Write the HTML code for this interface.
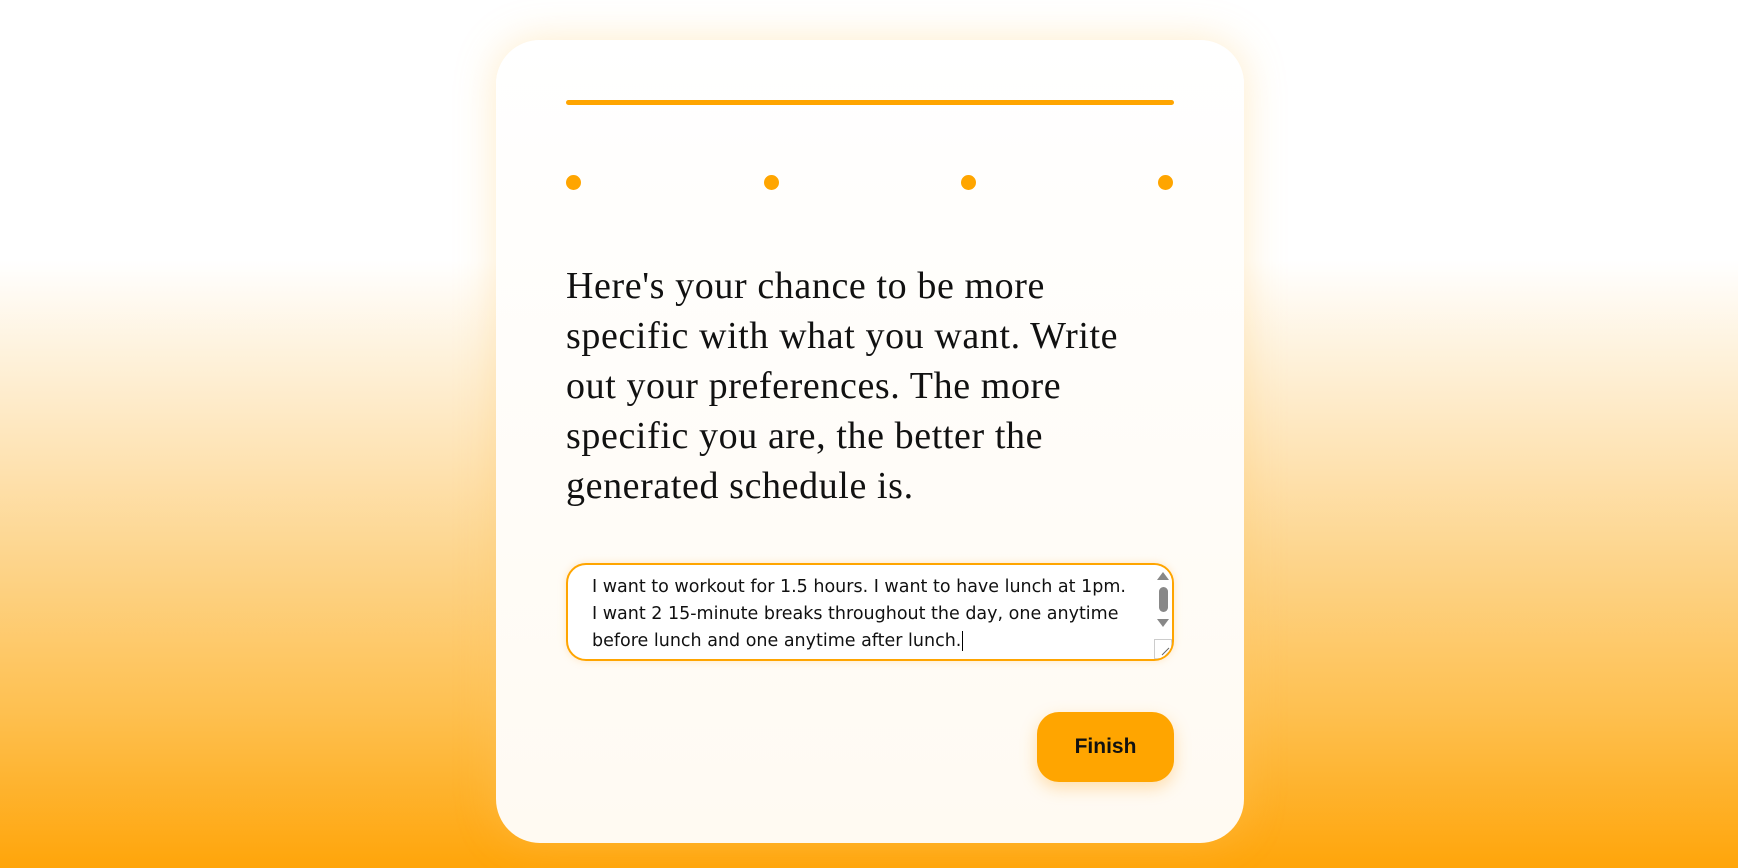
<!DOCTYPE html>
<html><head><style>
html,body{margin:0;padding:0;width:1738px;height:868px;overflow:hidden}
body{background:linear-gradient(to bottom,#fff 0%,#fff 30%,#fee9c4 48%,#fdd48a 65%,#fec050 82%,#ffa50a 100%);position:relative;font-family:"Liberation Sans",sans-serif}
.card{position:absolute;left:496px;top:40px;width:748px;height:803px;border-radius:44px;background:linear-gradient(to bottom,#fff 0%,#fffaf2 100%);box-shadow:0 0 40px rgba(255,200,100,0.35)}
.line{position:absolute;left:566px;top:100px;width:608px;height:5px;border-radius:3px;background:#ffa500}
.dot{position:absolute;top:175px;width:15px;height:15px;border-radius:50%;background:#ffa500}
.q{position:absolute;left:566px;top:261px;width:620px;font-family:"Liberation Serif",serif;font-size:38px;line-height:50px;color:#111;letter-spacing:0.6px}
.ta{position:absolute;left:566px;top:563px;width:604px;height:94px;border:2px solid #ffa500;border-radius:20px;background:#fff;box-shadow:0 0 8px rgba(255,200,120,.4);overflow:hidden}
.tt{position:absolute;left:24px;top:9px;font-family:"DejaVu Sans","Liberation Sans",sans-serif;font-size:17.5px;line-height:27px;color:#111;white-space:nowrap}
.sb{position:absolute;right:0;top:0;width:18px;height:100%;background:#fff}
.btn{position:absolute;left:1037px;top:712px;width:137px;height:70px;border-radius:22px;background:#ffa500;box-shadow:0 6px 16px rgba(255,170,40,.35);text-align:center;line-height:70px;font-size:21px;font-weight:bold;color:#111;font-family:"Liberation Sans",sans-serif}
</style></head><body>
<div class="card"></div>
<div class="line"></div>
<div class="dot" style="left:566px"></div>
<div class="dot" style="left:764px"></div>
<div class="dot" style="left:961px"></div>
<div class="dot" style="left:1158px"></div>
<div class="q">Here's your chance to be more<br>specific with what you want. Write<br>out your preferences. The more<br>specific you are, the better the<br>generated schedule is.</div>
<div class="ta">
<div class="tt">I want to workout for 1.5 hours. I want to have lunch at 1pm.<br>I want 2 15-minute breaks throughout the day, one anytime<br>before lunch and one anytime after lunch.<span style="border-left:1px solid #000;margin-left:1px"></span></div>
<div class="sb">
<svg width="18" height="94" viewBox="0 0 18 94"><path d="M3 15 L9 7 L15 15Z" fill="#888"/><rect x="5" y="22" width="9" height="25" rx="4.5" fill="#888"/><path d="M3 54 L9 62 L15 54Z" fill="#888"/><rect x="0.5" y="74.5" width="17" height="19" fill="#fff" stroke="#ccc"/><path d="M8 90 L15 83 M12 90 L15 87" stroke="#666" stroke-width="1"/></svg>
</div>
</div>
<div class="btn">Finish</div>
</body></html>
